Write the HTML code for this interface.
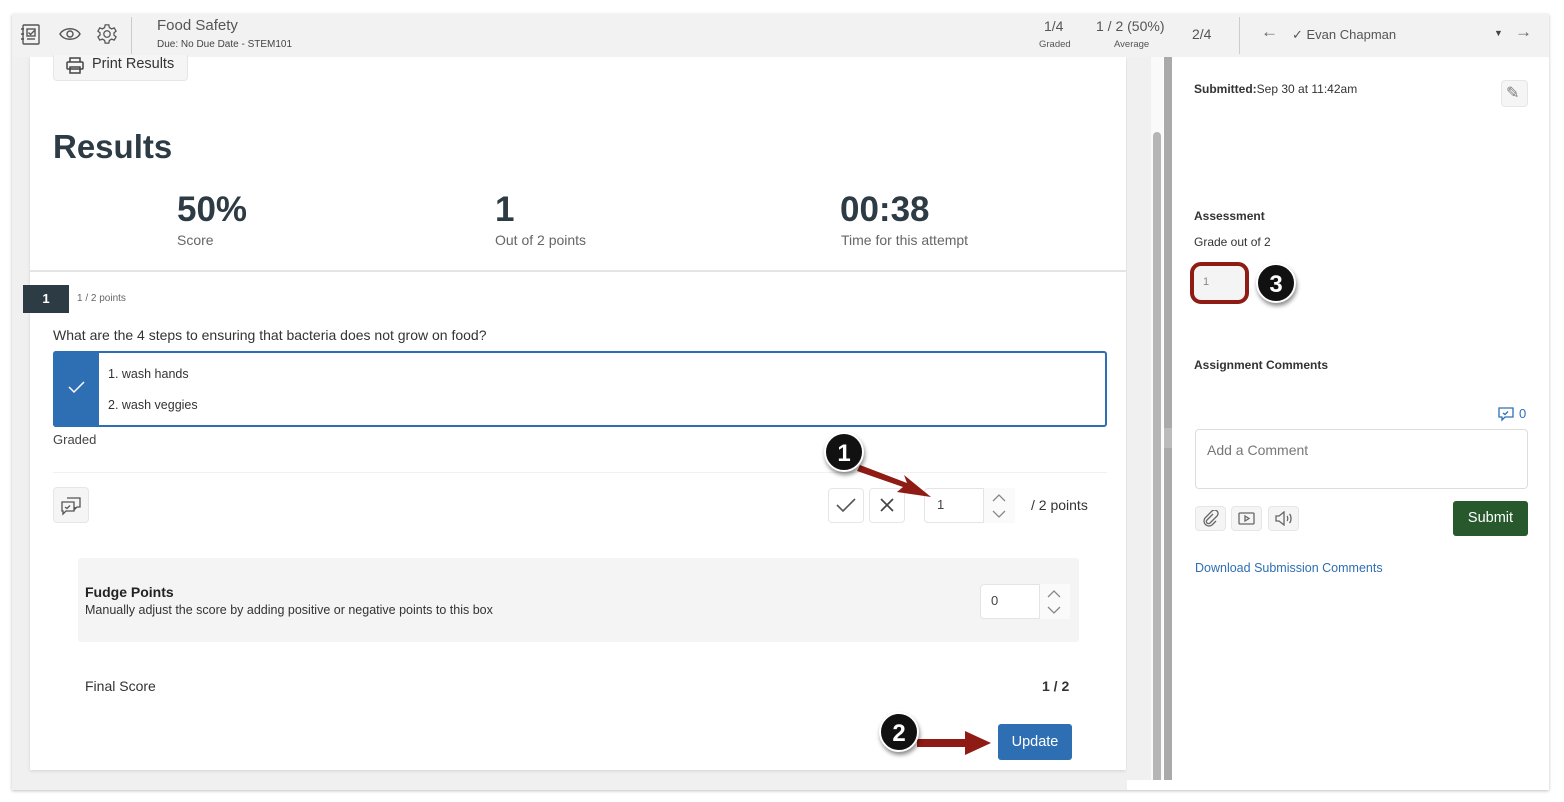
<!DOCTYPE html>
<html><head><meta charset="utf-8"><style>
*{box-sizing:border-box;margin:0;padding:0}
body{width:1564px;height:802px;background:#fff;font-family:"Liberation Sans",sans-serif;color:#2d3b45;position:relative;overflow:hidden}
.a{position:absolute}
.frame{left:12px;top:14px;width:1537px;height:776px;background:#fff;box-shadow:0 1px 3px rgba(0,0,0,.25)}
.top{left:12px;top:14px;width:1537px;height:43px;background:#f2f2f2}
.t{white-space:nowrap}
.btn{background:#f5f5f5;border:1px solid #e6e6e6;border-radius:4px}
.badge{width:40px;height:40px;border-radius:50%;background:#111;color:#fff;font-size:24px;font-weight:bold;text-align:center;line-height:40px;box-shadow:1px 3px 4px rgba(0,0,0,.45);border:2px solid #fff}
</style></head><body>
<div class="a frame"></div>
<div class="a" style="left:12px;top:57px;width:1115px;height:733px;background:#f0f0f0"></div>
<div class="a" style="left:30px;top:57px;width:1096px;height:713px;background:#fff;box-shadow:0 1px 3px rgba(0,0,0,.12)"></div>
<div class="a" style="left:1127px;top:57px;width:24px;height:723px;background:#f0f0f0"></div>
<div class="a" style="left:1151px;top:57px;width:12px;height:723px;background:#fafafa"></div>
<div class="a" style="left:1153px;top:132px;width:8px;height:648px;background:#b5b5b5;border-radius:4px 4px 0 0"></div>
<div class="a" style="left:1164px;top:57px;width:8px;height:723px;background:#aaa"></div>
<div class="a" style="left:1164px;top:428px;width:8px;height:20px;background:#bbb"></div>

<div class="a top"></div>
<svg class="a" style="left:20px;top:23px" width="22" height="24" viewBox="0 0 22 24" fill="none" stroke="#555" stroke-width="1.4"><rect x="3" y="2" width="16" height="19" rx="1"/><path d="M1 6h3M1 11h3M1 16h3"/><rect x="7" y="6" width="8" height="7"/><path d="M8.5 9.5l2 2 4-4"/><path d="M7 16h8"/></svg>
<svg class="a" style="left:59px;top:26px" width="22" height="16" viewBox="0 0 22 16" fill="none" stroke="#555" stroke-width="1.4"><path d="M1 8c4-7 16-7 20 0c-4 7-16 7-20 0z"/><circle cx="11" cy="8" r="3"/></svg>
<svg class="a" style="left:96px;top:23px" width="22" height="22" viewBox="0 0 24 24" fill="none" stroke="#555" stroke-width="1.4"><circle cx="12" cy="12" r="3.5"/><path d="M10 2h4l.6 3 2.4 1.4 2.9-1 2 3.4-2.3 2v2.4l2.3 2-2 3.4-2.9-1-2.4 1.4-.6 3h-4l-.6-3L7 17.6l-2.9 1-2-3.4 2.3-2V10.8l-2.3-2 2-3.4 2.9 1L9.4 5z"/></svg>
<div class="a" style="left:131px;top:17px;width:1px;height:37px;background:#ccc"></div>
<div class="a t" style="left:157px;top:17px;font-size:15px;color:#555">Food Safety</div>
<div class="a t" style="left:157px;top:39px;font-size:10px;color:#444">Due: No Due Date - STEM101</div>
<div class="a t" style="left:1044px;top:18px;font-size:14px;color:#555">1/4</div>
<div class="a t" style="left:1039px;top:39px;font-size:9.5px;color:#555">Graded</div>
<div class="a t" style="left:1096px;top:18px;font-size:14px;color:#555">1 / 2 (50%)</div>
<div class="a t" style="left:1114px;top:39px;font-size:9.5px;color:#555">Average</div>
<div class="a t" style="left:1192px;top:26px;font-size:14px;color:#555">2/4</div>
<div class="a" style="left:1239px;top:17px;width:1px;height:37px;background:#ccc"></div>
<div class="a t" style="left:1261px;top:22px;font-size:17px;color:#666">←</div>
<div class="a t" style="left:1292px;top:27px;font-size:13px;color:#555">✓ Evan Chapman</div>
<div class="a t" style="left:1494px;top:28px;font-size:9px;color:#444">▼</div>
<div class="a t" style="left:1515px;top:22px;font-size:17px;color:#666">→</div>

<div class="a btn" style="left:53px;top:55px;width:135px;height:26px;border-top:none;border-radius:0 0 4px 4px"></div>
<svg class="a" style="left:66px;top:57px" width="18" height="17" viewBox="0 0 18 17" fill="none" stroke="#444" stroke-width="1.5"><path d="M4 5V1h10v4"/><rect x="1" y="5" width="16" height="7" rx="1"/><rect x="4" y="10" width="10" height="6"/></svg>
<div class="a t" style="left:92px;top:56px;font-size:14.5px;color:#333">Print Results</div>

<div class="a t" style="left:53px;top:128px;font-size:33px;font-weight:bold;color:#2d3b45">Results</div>
<div class="a t" style="left:177px;top:190px;font-size:35px;font-weight:bold">50%</div>
<div class="a t" style="left:177px;top:232px;font-size:14px;color:#666">Score</div>
<div class="a t" style="left:495px;top:190px;font-size:35px;font-weight:bold">1</div>
<div class="a t" style="left:495px;top:232px;font-size:14px;color:#666">Out of 2 points</div>
<div class="a t" style="left:840px;top:190px;font-size:35px;font-weight:bold">00:38</div>
<div class="a t" style="left:841px;top:232px;font-size:14px;color:#666">Time for this attempt</div>
<div class="a" style="left:30px;top:270px;width:1096px;height:2px;background:#e4e4e4"></div>

<div class="a" style="left:23px;top:285px;width:46px;height:28px;background:#2d3b45;color:#fff;font-size:13px;font-weight:bold;text-align:center;line-height:28px">1</div>
<div class="a t" style="left:77px;top:293px;font-size:10px;color:#666">1 / 2 points</div>
<div class="a t" style="left:53px;top:327px;font-size:14px;color:#333">What are the 4 steps to ensuring that bacteria does not grow on food?</div>
<div class="a" style="left:53px;top:351px;width:1054px;height:76px;border:2px solid #2e6fb3;border-radius:3px;background:#fff"></div>
<div class="a" style="left:53px;top:351px;width:46px;height:76px;background:#2e6fb3;border-radius:3px 0 0 3px"></div>
<svg class="a" style="left:68px;top:381px" width="17" height="13" viewBox="0 0 17 13" fill="none" stroke="#fff" stroke-width="1.5"><path d="M1 6l5 5L16 1"/></svg>
<div class="a t" style="left:108px;top:367px;font-size:12.5px;color:#333">1. wash hands</div>
<div class="a t" style="left:108px;top:398px;font-size:12.5px;color:#333">2. wash veggies</div>
<div class="a t" style="left:53px;top:432px;font-size:13px;color:#444">Graded</div>
<div class="a" style="left:53px;top:472px;width:1054px;height:1px;background:#f0f0f0"></div>
<div class="a btn" style="left:53px;top:487px;width:36px;height:36px"></div>
<svg class="a" style="left:60px;top:494px" width="22" height="22" viewBox="0 0 22 22" fill="none" stroke="#555" stroke-width="1.3"><path d="M7 4h13v9h-3l-2 2v-2"/><path d="M2 8h12v9H6l-3 3v-3H2z"/><path d="M5 13l2 1.5 3-3"/></svg>

<div class="a btn" style="left:828px;top:488px;width:36px;height:35px;background:#fff"></div>
<svg class="a" style="left:836px;top:497px" width="20" height="16" viewBox="0 0 20 16" fill="none" stroke="#555" stroke-width="1.6"><path d="M1 8l6 6L19 2"/></svg>
<div class="a btn" style="left:869px;top:488px;width:36px;height:35px;background:#fff"></div>
<svg class="a" style="left:880px;top:498px" width="14" height="14" viewBox="0 0 14 14" stroke="#444" stroke-width="1.7"><path d="M1 1l12 12M13 1L1 13"/></svg>
<div class="a" style="left:924px;top:488px;width:91px;height:35px;border:1px solid #e4e4e4;border-radius:4px;background:#fff"></div>
<div class="a" style="left:983px;top:488px;width:32px;height:35px;border-left:1px solid #e4e4e4;background:#fafafa"></div>
<div class="a t" style="left:937px;top:497px;font-size:13px;color:#444">1</div>
<svg class="a" style="left:991px;top:492px" width="16" height="28" viewBox="0 0 16 28" fill="none" stroke="#888" stroke-width="1.3"><path d="M2 9l6-6 6 6M2 19l6 6 6-6"/></svg>
<div class="a t" style="left:1031px;top:497px;font-size:14px;color:#333">/ 2 points</div>

<svg class="a" style="left:855px;top:455px" width="80" height="45" viewBox="0 0 80 45"><path d="M5 10L52 28l-3 -8 27 22-34-5 6-5L2 16z" fill="#8e1b14"/></svg>
<div class="a badge" style="left:824px;top:432px">1</div>

<div class="a" style="left:78px;top:558px;width:1001px;height:84px;background:#f4f4f4;border-radius:3px"></div>
<div class="a t" style="left:85px;top:584px;font-size:14px;font-weight:bold;color:#222">Fudge Points</div>
<div class="a t" style="left:85px;top:603px;font-size:12.5px;color:#333">Manually adjust the score by adding positive or negative points to this box</div>
<div class="a" style="left:980px;top:584px;width:90px;height:35px;border:1px solid #e4e4e4;border-radius:4px;background:#fff"></div>
<div class="a" style="left:1039px;top:584px;width:31px;height:35px;border-left:1px solid #e4e4e4;background:#fafafa"></div>
<div class="a t" style="left:991px;top:593px;font-size:13px;color:#444">0</div>
<svg class="a" style="left:1046px;top:588px" width="16" height="28" viewBox="0 0 16 28" fill="none" stroke="#888" stroke-width="1.3"><path d="M2 9l6-6 6 6M2 19l6 6 6-6"/></svg>

<div class="a t" style="left:85px;top:678px;font-size:14px;color:#333">Final Score</div>
<div class="a t" style="left:1042px;top:678px;font-size:14px;font-weight:bold;color:#333">1 / 2</div>
<div class="a" style="left:998px;top:724px;width:74px;height:36px;background:#2e6fb3;border-radius:3px;color:#fff;font-size:14.5px;text-align:center;line-height:36px">Update</div>
<svg class="a" style="left:915px;top:728px" width="80" height="30" viewBox="0 0 80 30"><path d="M2 11h48V3l26 12-26 12v-8H2z" fill="#8e1b14"/></svg>
<div class="a badge" style="left:879px;top:712px">2</div>

<div class="a t" style="left:1194px;top:82px;font-size:12px;color:#333"><b>Submitted:</b>Sep 30 at 11:42am</div>
<div class="a btn" style="left:1501px;top:80px;width:27px;height:27px"></div>
<div class="a t" style="left:1506px;top:83px;font-size:16px;color:#777">✎</div>
<div class="a t" style="left:1194px;top:209px;font-size:12px;font-weight:bold;color:#333">Assessment</div>
<div class="a t" style="left:1194px;top:235px;font-size:12px;color:#333">Grade out of 2</div>
<div class="a" style="left:1190px;top:262px;width:59px;height:42px;border:4px solid #8e1b14;border-radius:11px;background:#f4f4f4"></div>
<div class="a t" style="left:1203px;top:276px;font-size:11px;color:#888">1</div>
<div class="a badge" style="left:1256px;top:263px">3</div>
<div class="a t" style="left:1194px;top:358px;font-size:12px;font-weight:bold;color:#333">Assignment Comments</div>
<svg class="a" style="left:1498px;top:407px" width="16" height="15" viewBox="0 0 16 15" fill="none" stroke="#2e6fb3" stroke-width="1.3"><path d="M1 1h14v9H7l-3 3v-3H1z"/><path d="M5 6l2 1.5 3-3"/></svg>
<div class="a t" style="left:1519px;top:406px;font-size:13px;color:#2e6fb3">0</div>
<div class="a" style="left:1195px;top:429px;width:333px;height:60px;border:1px solid #ddd;border-radius:4px"></div>
<div class="a t" style="left:1207px;top:442px;font-size:14px;color:#777">Add a Comment</div>
<div class="a btn" style="left:1195px;top:506px;width:31px;height:25px"></div>
<div class="a btn" style="left:1231px;top:506px;width:31px;height:25px"></div>
<div class="a btn" style="left:1268px;top:506px;width:31px;height:25px"></div>
<svg class="a" style="left:1202px;top:510px" width="17" height="17" viewBox="0 0 17 17" fill="none" stroke="#666" stroke-width="1.3"><path d="M11 4L5 10a2 2 0 003 3l7-7a3.5 3.5 0 00-5-5L3 8a5 5 0 007 7l4-4"/></svg>
<svg class="a" style="left:1238px;top:512px" width="17" height="13" viewBox="0 0 17 13" fill="none" stroke="#666" stroke-width="1.3"><rect x="1" y="1" width="15" height="11" rx="1"/><path d="M7 4v5l4-2.5z"/></svg>
<svg class="a" style="left:1275px;top:511px" width="18" height="15" viewBox="0 0 18 15" fill="none" stroke="#666" stroke-width="1.3"><path d="M1 5h3l5-4v13l-5-4H1z"/><path d="M12 5c1 1 1 4 0 5M14.5 3c2 2 2 7 0 9"/></svg>
<div class="a" style="left:1453px;top:501px;width:75px;height:35px;background:#27592d;border-radius:3px;color:#fff;font-size:14.5px;text-align:center;line-height:35px">Submit</div>
<div class="a t" style="left:1195px;top:561px;font-size:12.5px;color:#2e6fb3">Download Submission Comments</div>
</body></html>
